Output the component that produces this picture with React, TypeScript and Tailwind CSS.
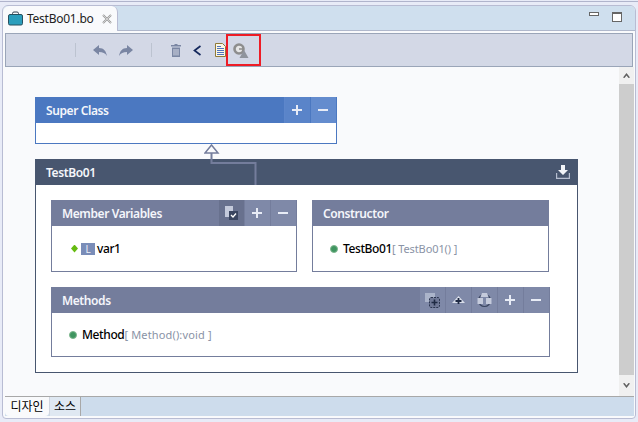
import React from "react";

const font = { fontFamily: '"Noto Sans","Noto Sans CJK KR",sans-serif' };

function HBtn({ children, hl, w = "w-[26px]" }: { children: React.ReactNode; hl: string; w?: string }) {
  return <div className={`${w} h-full flex items-center justify-center pr-px border-l ${hl}`}>{children}</div>;
}
const Plus = () => (
  <svg width="10" height="10" viewBox="0 0 10 10"><path d="M4 0h2v4h4v2H6v4H4V6H0V4h4z" fill="#e8ecf6" /></svg>
);
const Minus = () => (
  <svg width="10" height="10" viewBox="0 0 10 10"><rect x="0" y="4" width="10" height="2" fill="#e8ecf6" /></svg>
);
const Dot = () => (
  <span className="w-[8px] h-[8px] rounded-full bg-[#3f9560] border border-[#7fb78f] shrink-0" />
);
const titleCls = "pl-[11px] pt-[2px] text-[12px] font-semibold tracking-[-0.4px] text-[#f4f6fb] leading-none";

function Panel({ title, icons, className, bodyH, children }: { title: string; icons?: React.ReactNode; className: string; bodyH: string; children: React.ReactNode }) {
  return (
    <div className={`border border-[#747d9c] border-t-0 bg-white ${className}`}>
      <div className="h-[26px] -mx-px bg-[#747d9c] flex items-center justify-between">
        <span className={titleCls}>{title}</span>
        <div className="flex h-full pr-px">{icons}</div>
      </div>
      <div className={`${bodyH} flex items-center`}>{children}</div>
    </div>
  );
}

export default function App() {
  return (
    <div className="relative w-[638px] h-[422px] bg-[#e8ebf7] overflow-hidden pt-[1px] text-[12px]" style={font}>
      <div className="h-[1px] bg-[#b0b4cc]" />
      <div className="mt-[3px] ml-[2px] mr-[2px] h-[414px] border border-[#b8bcd3] rounded-t-[6px] rounded-b-[4px] bg-[#f9fafc] flex flex-col overflow-hidden">
        {/* top tab bar */}
        <div className="h-[25px] shrink-0 bg-[#cfdfee] border-b border-[#b0b8cc] flex items-stretch justify-between">
          <div className="w-[115px] h-[25px] bg-[#f9fafc] rounded-t-[6px] border-r border-[#b8bcd3] flex items-center pl-[5px] gap-[4px]">
            <svg width="15" height="15" viewBox="0 0 15 15">
              <path d="M4.500 4V2.500Q4.500 1 6 1h3q1.500 0 1.500 1.500V4" fill="none" stroke="#33414f" strokeWidth="1" />
              <rect x="0.500" y="3.500" width="14" height="10.500" rx="1.500" fill="#2b9ebc" stroke="#27505f" />
            </svg>
            <span className="text-[12px] tracking-[-0.25px] text-[#222] leading-none">TestBo01.bo</span>
            <svg className="ml-[4px]" width="10" height="10" viewBox="0 0 10 10">
              <path d="M1 1l8 8M9 1l-8 8" stroke="#9a9a9a" strokeWidth="2" />
              <path d="M1 1l8 8M9 1l-8 8" stroke="#f4f4f4" strokeWidth="0.600" />
            </svg>
          </div>
          <div className="flex items-center pr-[13px] gap-[13px]">
            <div className="w-[10px] h-[4px] border border-[#666] bg-white -mt-[8px]" />
            <div className="w-[10px] h-[10px] border border-[#666] border-t-2 bg-white -mt-[2px]" />
          </div>
        </div>
        {/* toolbar */}
        <div className="mt-[2px] ml-[2px] mr-[2px] h-[34px] shrink-0 bg-[#d3d8e6] border border-[#9aa5b8] flex items-center">
          <div className="ml-[69px] w-px h-[14px] bg-[#bcc3d0]" />
          <svg className="ml-[17px]" width="14" height="11" viewBox="0 0 14 11"><path d="M6 0v3c5 0 7 3 8 8-2-3-4-4-8-4v3L0 5z" fill="#7a86a3" /></svg>
          <svg className="ml-[12px]" width="14" height="11" viewBox="0 0 14 11"><path d="M8 0v3C3 3 1 6 0 11c2-3 4-4 8-4v3l6-5z" fill="#7a86a3" /></svg>
          <div className="ml-[18px] w-px h-[14px] bg-[#bcc3d0]" />
          <svg className="ml-[19px]" width="10" height="13" viewBox="0 0 10 13"><path d="M3.500 0h3v1H10v1.500H0V1h3.500zM1 3.500h8V13H1zM2.500 5v6.500h1V5zM4.500 5v6.500h1V5zM6.500 5v6.500h1V5z" fill="#7a86a3" fillRule="evenodd" /></svg>
          <svg className="ml-[12px]" width="8" height="11" viewBox="0 0 8 11"><path d="M7.500 1L1.500 5.500l6 4.500" fill="none" stroke="#14285c" strokeWidth="1.700" /></svg>
          <svg className="ml-[14px]" width="11" height="14" viewBox="0 0 11 14"><path d="M.5.500h7l3 3v10H.5z" fill="#fdf8e4" stroke="#8f7a38" /><path d="M2 3.500h4M2 5.500h7M2 7.500h7M2 9.500h7M2 11.500h7" stroke="#4f74bd" /></svg>
          <svg className="ml-[7px]" width="16" height="15" viewBox="0 0 16 15">
            <circle cx="6" cy="6" r="4.500" fill="#e6e6e6" stroke="#8d8d8d" strokeWidth="2.600" />
            <path d="M6 6h5" stroke="#8d8d8d" strokeWidth="1.600" />
            <path d="M11 7l4.500 8h-9z" fill="#8f949c" />
          </svg>
        </div>
        {/* main */}
        <div className="flex-1 min-h-0 ml-[2px] mr-[1px] flex">
          <div className="relative flex-1 pt-[30px] pl-[30px]">
            <div className="w-[302px] h-[47px] border border-[#4b78c1] border-t-0 bg-white">
              <div className="h-[26px] -mx-px bg-[#4b78c1] flex items-center justify-between">
                <span className={titleCls}>Super Class</span>
                <div className="flex h-full pr-px">
                  <HBtn hl="border-[#5d86cb] bg-[#5a84c9]"><Plus /></HBtn>
                  <HBtn hl="border-[#4b78c1] bg-[#648cce]"><Minus /></HBtn>
                </div>
              </div>
            </div>
            <div className="mt-[15px] w-[543px] h-[214px] border border-[#48566f] border-t-0 bg-white">
              <div className="h-[26px] -mx-px bg-[#48566f] flex items-center justify-between">
                <span className={titleCls}>TestBo01</span>
                <svg className="mr-[8px]" width="14" height="14" viewBox="0 0 14 14"><path d="M5 0h4v5h3L7 10 2 5h3z" fill="#f2f4f8" /><path d="M.5 8v5.500h13V8" fill="none" stroke="#b6bed0" strokeWidth="1.400" /></svg>
              </div>
              <div className="pt-[15px] pl-[15px]">
                <div className="flex gap-[15px]">
                  <Panel title="Member Variables" className="w-[246px]" bodyH="h-[45px]" icons={<>
                    <HBtn hl="border-[#747d9c] bg-[#68718e]">
                      <svg width="13" height="14" viewBox="0 0 13 14"><path d="M0 0h8l0 11H0z" fill="#c4cadb" /><rect x="4" y="5" width="9" height="9" fill="#3a4560" /><path d="M6 9l2 2 3-3.500" fill="none" stroke="#fff" strokeWidth="1.300" /></svg>
                    </HBtn>
                    <HBtn hl="border-[#747d9c] bg-[#7f89a8]"><Plus /></HBtn>
                    <HBtn hl="border-[#747d9c] bg-[#7f89a8]"><Minus /></HBtn>
                  </>}>
                    <div className="flex items-center pl-[19px]">
                      <span className="w-[7px] h-[8px] bg-[#66bb11] [clip-path:polygon(50%_0,100%_50%,50%_100%,0_50%)] shrink-0" />
                      <span className="ml-[3px] w-[14px] h-[12px] bg-[#7a8db8] text-[#eef1f8] text-[10px] flex items-center justify-center leading-none">L</span>
                      <span className="ml-[2px] text-[12px] font-medium tracking-[-0.4px] text-black leading-none">var1</span>
                    </div>
                  </Panel>
                  <Panel title="Constructor" className="w-[237px]" bodyH="h-[45px]">
                    <div className="flex items-center pl-[17px] leading-none">
                      <Dot />
                      <span className="ml-[5px] text-[12px] font-medium tracking-[-0.4px] text-black">TestBo01</span>
                      <span className="text-[11px] tracking-[-0.1px] text-[#8a93a6]">[ TestBo01() ]</span>
                    </div>
                  </Panel>
                </div>
                <div className="mt-[15px]">
                  <Panel title="Methods" className="w-[499px]" bodyH="h-[43px]" icons={<>
                    <HBtn hl="border-[#747d9c] bg-[#7f89a8]">
                      <svg width="15" height="15" viewBox="0 0 15 15"><rect x="0" y="0" width="10" height="9" fill="#b7bfd2" opacity="0.800" /><rect x="4.500" y="4.500" width="10" height="10" rx="1.500" fill="#6f7896" stroke="#2c3650" strokeDasharray="2 1" /><path d="M9.500 6.500v6M6.500 9.500h6" stroke="#1f2a44" strokeWidth="1.600" /></svg>
                    </HBtn>
                    <HBtn hl="border-[#747d9c] bg-[#7f89a8]">
                      <svg width="13" height="9" viewBox="0 0 13 9"><path d="M6.500 0L13 7H0z" fill="#d9deea" /><path d="M6.500 2v6M3.500 5h6" stroke="#1f2a44" strokeWidth="1.800" /></svg>
                    </HBtn>
                    <HBtn hl="border-[#747d9c] bg-[#7f89a8]">
                      <svg width="15" height="15" viewBox="0 0 15 15"><circle cx="7.500" cy="7.500" r="6" fill="none" stroke="#3a4560" strokeWidth="1.200" /><path d="M5 0h5l1.500 4h-8z" fill="#c4cadb" /><rect x="0.500" y="5" width="5.500" height="6" fill="#c4cadb" /><rect x="9" y="5" width="5.500" height="6" fill="#c4cadb" /></svg>
                    </HBtn>
                    <HBtn hl="border-[#747d9c] bg-[#7f89a8]"><Plus /></HBtn>
                    <HBtn hl="border-[#747d9c] bg-[#7f89a8]"><Minus /></HBtn>
                  </>}>
                    <div className="flex items-center pl-[17px] leading-none">
                      <Dot />
                      <span className="ml-[5px] text-[12px] font-medium tracking-[-0.4px] text-black">Method</span>
                      <span className="text-[11px] tracking-[0.15px] text-[#8a93a6]">[ Method():void ]</span>
                    </div>
                  </Panel>
                </div>
              </div>
            </div>
            {/* inheritance connector */}
            <svg className="absolute left-[199px] top-[77px]" width="56" height="41" viewBox="0 0 56 41">
              <path d="M7.500 20V9" fill="none" stroke="#747d9c" strokeWidth="2" />
              <path d="M7.500 1L14 9H1z" fill="#f9fafc" stroke="#747d9c" strokeWidth="1.500" />
              <path d="M7.500 19h44v22" fill="none" stroke="#747d9c" strokeWidth="2" />
            </svg>
          </div>
          {/* scrollbar */}
          <div className="w-[15px] shrink-0 flex flex-col bg-[#cdcdcd]">
            <div className="h-[17px] bg-[#f0f0f0] flex items-center justify-center">
              <svg width="9" height="7" viewBox="0 0 9 7"><path d="M4.500 1L8 5.500 6.500 6 4.500 3.500 2.500 6 1 5.500z" fill="#606060" /></svg>
            </div>
            <div className="flex-1" />
            <div className="h-[21px] bg-[#f0f0f0] flex items-center justify-center">
              <svg width="9" height="7" viewBox="0 0 9 7"><path d="M4.500 6L8 1.500 6.500 1 4.500 3.500 2.500 1 1 1.500z" fill="#606060" /></svg>
            </div>
          </div>
        </div>
        {/* bottom tabs */}
        <div className="h-[22px] shrink-0 ml-[2px] mr-[1px] border-t border-[#a8a8a8] text-[12px] text-black">
          <div className="h-[19px] bg-[#cddcec] flex">
            <div className="w-[44px] bg-[#f9fafc] rounded-b-[4px] flex items-center justify-center leading-none">디자인</div>
            <div className="w-[32px] border-r border-[#a8a8a8] border-l border-l-[#d0d6e0] bg-[#dfe8f2] flex items-center justify-center leading-none">소스</div>
          </div>
        </div>
      </div>
      {/* annotation highlight */}
      <div className="absolute left-[226px] top-[34px] w-[35px] h-[32px] border-2 border-[#ee1c25]" />
    </div>
  );
}
